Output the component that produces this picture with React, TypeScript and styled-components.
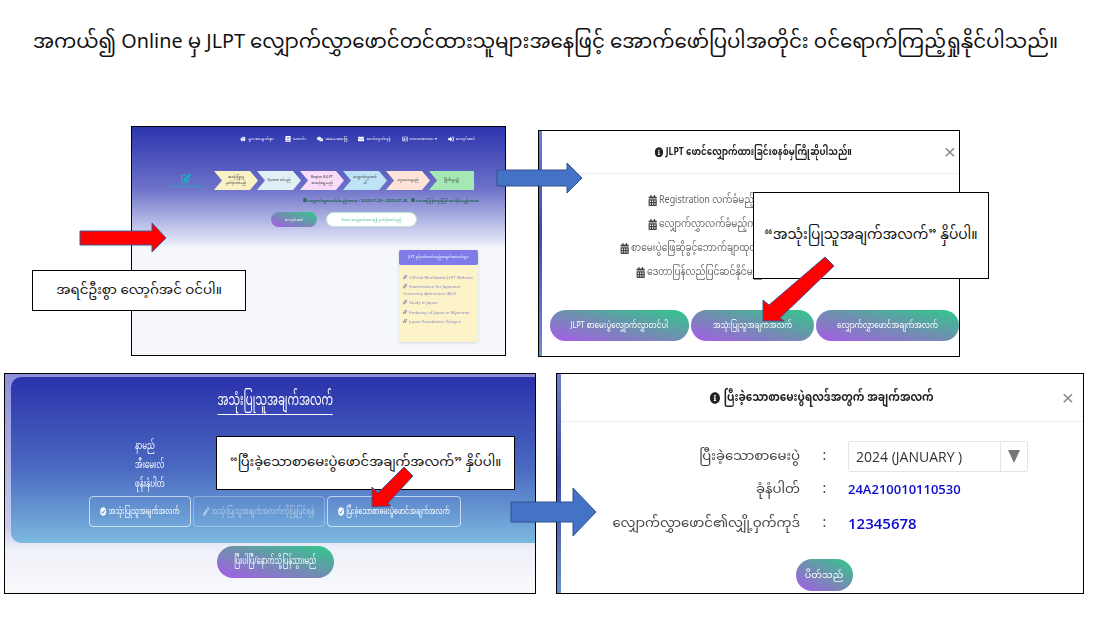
import styled, { createGlobalStyle } from "styled-components";
import {
  FaBook,
  FaCalendarAlt,
  FaCheckCircle,
  FaComments,
  FaEdit,
  FaEnvelope,
  FaHome,
  FaInfoCircle,
  FaLink,
  FaPen,
  FaRegAddressCard,
  FaSignInAlt,
} from "react-icons/fa";

const GlobalStyle = createGlobalStyle`
  html, body {
    margin: 0;
    padding: 0;
    background: #fff;
  }
  body {
    font-family: "Noto Sans Myanmar", "Padauk", "Myanmar Text", "Noto Sans", "Liberation Sans", sans-serif;
    color: #111;
  }
`;

const greenPurple = "linear-gradient(to top right, #a75ce8 0%, #6f8fb0 50%, #2fca8a 100%)";

const Slide = styled.div`
  position: relative;
  width: 1101px;
  height: 623px;
  overflow: hidden;
  background: #fff;
`;

const Title = styled.h1`
  margin: 0;
  height: 86px;
  padding-right: 10px;
  display: flex;
  align-items: center;
  justify-content: center;
  font-size: 19.8px;
  font-weight: 400;
  white-space: nowrap;
`;

const ShotRow = styled.div<{ $top: number; $left: number; $gap: number }>`
  display: flex;
  align-items: flex-start;
  margin-top: ${(p) => p.$top}px;
  padding-left: ${(p) => p.$left}px;
  gap: ${(p) => p.$gap}px;
`;

const Shot = styled.section<{ $w: number; $h: number; $drop?: number }>`
  box-sizing: border-box;
  flex: none;
  width: ${(p) => p.$w}px;
  height: ${(p) => p.$h}px;
  margin-top: ${(p) => p.$drop ?? 0}px;
  border: 1px solid #000;
  overflow: hidden;
  background: #fff;
`;

/* the screenshots in the slide were squeezed sideways, so their text is too */
const Squeezed = styled.span<{ $x: number; $gap?: number }>`
  display: inline-flex;
  align-items: center;
  gap: ${(p) => p.$gap ?? 3}px;
  flex: none;
  white-space: nowrap;
  transform: scaleX(${(p) => p.$x});
`;

/* first screenshot: the landing page, very small and soft */
const Landing = styled.div`
  height: 100%;
  display: flex;
  flex-direction: column;
  background: linear-gradient(180deg, #2c35ae 0%, #6d72c9 27%, #b7bbe6 42%, #e6e8f6 51%, #f5f7fb 53%);
  filter: blur(0.65px);
`;

const TopNav = styled.nav`
  display: flex;
  justify-content: flex-end;
  gap: 11px;
  padding: 5px 30px 0 0;
  height: 14px;
`;

const NavItem = styled.span`
  display: flex;
  align-items: center;
  gap: 2px;
  color: #fff;
  font-size: 4.2px;
  line-height: 6px;
  white-space: nowrap;
  svg {
    font-size: 6px;
  }
`;

const StepBar = styled.div`
  display: flex;
  align-items: center;
  margin-top: 25px;
  padding-left: 27px;
`;

const StepIntro = styled.div`
  width: 54px;
  display: flex;
  flex-direction: column;
  align-items: center;
  color: #14b4bc;
  font-size: 3.6px;
  line-height: 6px;
  white-space: nowrap;
  svg {
    font-size: 10px;
  }
`;

const Steps = styled.div`
  display: flex;
  margin-left: 1px;
`;

const Step = styled.div<{ $bg: string; $last?: boolean }>`
  width: ${(p) => (p.$last ? 45 : 44)}px;
  height: 19px;
  margin-right: -1px;
  display: flex;
  align-items: center;
  justify-content: center;
  padding: 0 9px;
  box-sizing: border-box;
  text-align: center;
  background: ${(p) => p.$bg};
  clip-path: ${(p) =>
    p.$last
      ? "polygon(0 0, 100% 0, 100% 100%, 0 100%, 8px 50%)"
      : "polygon(0 0, calc(100% - 8px) 0, 100% 50%, calc(100% - 8px) 100%, 0 100%, 8px 50%)"};
  font-size: 3.4px;
  line-height: 5.5px;
  color: #333;
`;

const DateLine = styled.div`
  display: flex;
  justify-content: flex-end;
  gap: 4px;
  margin-top: 8px;
  padding-right: 26px;
  color: #17603c;
  font-size: 4px;
  font-weight: 600;
  line-height: 6px;
  white-space: nowrap;
`;

const LandingActions = styled.div`
  display: flex;
  gap: 9px;
  margin-top: 8px;
  padding-left: 139px;
`;

const LoginPill = styled.span`
  width: 46px;
  height: 15px;
  border-radius: 8px;
  display: flex;
  align-items: center;
  justify-content: center;
  background: ${greenPurple};
  color: #fff;
  font-size: 4px;
`;

const FormPill = styled.span`
  width: 91px;
  height: 15px;
  box-sizing: border-box;
  border: 1px solid #bfe6d9;
  border-radius: 8px;
  display: flex;
  align-items: center;
  justify-content: center;
  background: #fff;
  color: #3bbd8d;
  font-size: 3.8px;
  white-space: nowrap;
`;

const InfoCard = styled.aside`
  width: 79px;
  height: 92px;
  margin: 23px 0 0 267px;
  border-radius: 2px;
  background: #fdf3c8;
  box-shadow: 0 1px 3px rgba(80, 80, 120, 0.2);
  color: #8a88c8;
  font-size: 4.3px;
  line-height: 6.5px;
`;

const InfoCardHead = styled.div`
  height: 15px;
  border-radius: 2px;
  display: flex;
  align-items: center;
  justify-content: center;
  background: #7f7be8;
  color: #fff;
  font-size: 3.4px;
  white-space: nowrap;
`;

const InfoLinks = styled.ul`
  list-style: none;
  margin: 0;
  padding: 10px 4px 0;
  li {
    margin-bottom: 2.6px;
  }
  svg {
    margin-right: 2px;
    color: #7a78c4;
  }
`;

/* modal screenshots */
const Modal = styled.div<{ $strip: number }>`
  height: 100%;
  box-sizing: border-box;
  border-left: ${(p) => p.$strip}px solid;
  border-image: linear-gradient(180deg, #6f7fd2 0%, #3c49b0 45%, #6a8fd0 100%) 1;
  display: flex;
  flex-direction: column;
  filter: blur(0.25px);
`;

const ModalHead = styled.header<{ $h: number; $size: number; $nudge?: number }>`
  position: relative;
  flex: none;
  box-sizing: border-box;
  height: ${(p) => p.$h}px;
  padding-left: ${(p) => p.$nudge ?? 0}px;
  border-bottom: 1px solid #eee;
  display: flex;
  align-items: center;
  justify-content: center;
  font-size: ${(p) => p.$size}px;
  font-weight: 700;
  color: #222;
  white-space: nowrap;
`;

const CloseMark = styled.span<{ $right: number }>`
  position: absolute;
  right: ${(p) => p.$right}px;
  top: 50%;
  transform: translateY(-50%);
  font-family: "Liberation Sans", sans-serif;
  font-size: 21px;
  font-weight: 400;
  color: #8b8b8b;
`;

const PeriodList = styled.div`
  flex: 1;
  display: flex;
  flex-direction: column;
  padding: 17px 0 0;
  gap: 6px;
`;

const PeriodRow = styled.div<{ $indent: number }>`
  display: flex;
  height: 18px;
  align-items: center;
  margin-left: ${(p) => p.$indent}px;
  font-size: 10.5px;
  color: #666;
  white-space: nowrap;
  ${Squeezed} {
    transform-origin: left center;
  }
  svg {
    color: #444;
    font-size: 11px;
  }
`;

const ModalActions = styled.div`
  display: flex;
  gap: 2px;
  padding: 0 0 15px 8px;
`;

const GradientPill = styled.span<{ $w: number; $h: number; $size: number }>`
  flex: none;
  width: ${(p) => p.$w}px;
  height: ${(p) => p.$h}px;
  border-radius: ${(p) => Math.round(p.$h / 2) + 1}px;
  display: flex;
  align-items: center;
  justify-content: center;
  background: ${greenPurple};
  color: #fff;
  font-size: ${(p) => p.$size}px;
  white-space: nowrap;
`;

/* profile screenshot */
const Profile = styled.div`
  height: 100%;
  display: flex;
  flex-direction: column;
  align-items: center;
  background: linear-gradient(180deg, #8d90d8 0%, #c9cdec 70%, #eef0f8 80%, #fafafd 100%);
  filter: blur(0.25px);
`;

const ProfileHero = styled.div`
  align-self: stretch;
  box-sizing: border-box;
  height: 166px;
  flex: none;
  margin: 3px 0 0 6px;
  padding-left: 5px;
  border-radius: 10px 0 0 10px;
  background: linear-gradient(180deg, #2b32ac 0%, #4a69c0 55%, #7cb9e0 100%);
  color: #fff;
  display: flex;
  flex-direction: column;
  align-items: center;
`;

const HeroTitle = styled.h2`
  margin: 14px 0 0;
  padding-bottom: 1px;
  border-bottom: 1px solid #fff;
  font-size: 16px;
  line-height: 22px;
  font-weight: 400;
  white-space: nowrap;
  transform: scaleX(0.64);
`;

const FieldLabels = styled.div`
  align-self: flex-start;
  margin: 22px 0 0 119px;
  display: flex;
  flex-direction: column;
  align-items: flex-start;
  font-size: 11px;
  line-height: 19px;
  ${Squeezed} {
    transform-origin: left center;
  }
`;

const HeroButtons = styled.div`
  align-self: flex-start;
  display: flex;
  gap: 2px;
  margin: 2px 0 0 73px;
`;

const OutlineButton = styled.span<{ $w: number; $off?: boolean }>`
  box-sizing: border-box;
  width: ${(p) => p.$w}px;
  height: 31px;
  border: 1px solid rgba(255, 255, 255, ${(p) => (p.$off ? 0.3 : 0.65)});
  border-radius: 4px;
  display: flex;
  align-items: center;
  justify-content: center;
  color: rgba(255, 255, 255, ${(p) => (p.$off ? 0.45 : 1)});
  font-size: 9px;
  white-space: nowrap;
`;

const BackRow = styled.div`
  display: flex;
  margin: 3px 0 0 10px;
`;

/* result screenshot */
const ResultForm = styled.div`
  flex: 1;
  display: grid;
  grid-template-columns: 239px 48px auto;
  grid-template-rows: 31px 34px 34px;
  align-content: start;
  align-items: center;
  padding-top: 19px;
`;

const FieldName = styled.span`
  text-align: right;
  font-size: 13.3px;
  color: #444;
  white-space: nowrap;
`;

const Colon = styled.span`
  text-align: center;
  font-size: 14px;
  color: #444;
  padding-left: 1px;
`;

const FieldValue = styled.span<{ $size: number }>`
  font-family: "Open Sans", "Noto Sans", sans-serif;
  font-size: ${(p) => p.$size}px;
  font-weight: 600;
  color: #0a0ad0;
`;

const YearSelect = styled.div`
  box-sizing: border-box;
  width: 180px;
  height: 31px;
  border: 1px solid #e4e4e4;
  border-radius: 2px;
  display: flex;
  align-items: center;
  padding-left: 7px;
  font-family: "Open Sans", "Noto Sans", sans-serif;
  font-size: 14px;
  font-weight: 500;
  color: #333;
  white-space: nowrap;
`;

const SelectCaret = styled.span`
  margin-left: auto;
  align-self: stretch;
  width: 26px;
  border-left: 1px solid #e4e4e4;
  display: flex;
  align-items: center;
  justify-content: center;
  &::after {
    content: "";
    border-left: 6px solid transparent;
    border-right: 6px solid transparent;
    border-top: 13px solid #777;
  }
`;

const CloseRow = styled.div`
  display: flex;
  justify-content: center;
  padding: 0 0 2px 4px;
`;

/* callouts and arrows that lie over the screenshots */
const Callout = styled.div<{ $x: number; $y: number; $w: number; $h: number; $size: number }>`
  position: absolute;
  left: ${(p) => p.$x}px;
  top: ${(p) => p.$y}px;
  width: ${(p) => p.$w}px;
  height: ${(p) => p.$h}px;
  box-sizing: border-box;
  border: 1px solid #000;
  background: #fff;
  display: flex;
  align-items: center;
  justify-content: center;
  font-size: ${(p) => p.$size}px;
  color: #111;
  white-space: nowrap;
`;

const ArrowLayer = styled.svg`
  position: absolute;
  inset: 0;
  width: 1101px;
  height: 623px;
  pointer-events: none;
`;

const stepItems = [
  { bg: "#fbf2c4", text: "အသုံးပြုသူ မှတ်ပုံတင်မည်" },
  { bg: "#e0f0f6", text: "System ဝင်မည်" },
  { bg: "#fbdcf8", text: "Region & JLPT အဆင့်ရွေးမည်" },
  { bg: "#bfe3f6", text: "လျှောက်လွှာတင်ပါ" },
  { bg: "#fde3d8", text: "ငွေပေးချေမည်" },
  { bg: "#a5e8b4", text: "ပြီးစီးမှုရရှိ", last: true },
];

const App = () => {
  return (
    <Slide>
      <GlobalStyle />
      <Title>
        အကယ်၍ Online မှ JLPT လျှောက်လွှာဖောင်တင်ထားသူများအနေဖြင့် အောက်ဖော်ပြပါအတိုင်း ဝင်ရောက်ကြည့်ရှုနိုင်ပါသည်။
      </Title>

      <ShotRow $top={40} $left={131} $gap={32}>
        <Shot $w={375} $h={230}>
          <Landing>
            <TopNav>
              <NavItem><FaHome />မူလစာမျက်နှာ</NavItem>
              <NavItem><FaBook />သတင်း</NavItem>
              <NavItem><FaComments />အမေးအဖြေ</NavItem>
              <NavItem><FaEnvelope />ဆက်သွယ်ရန်</NavItem>
              <NavItem><FaRegAddressCard />ဘာသာစကား ▾</NavItem>
              <NavItem><FaSignInAlt />လော့ဂ်အင်</NavItem>
            </TopNav>
            <StepBar>
              <StepIntro>
                <FaEdit />
                လျှောက်လွှာအဆင့်ဆင့်
              </StepIntro>
              <Steps>
                {stepItems.map((s) => (
                  <Step key={s.text} $bg={s.bg} $last={s.last}>{s.text}</Step>
                ))}
              </Steps>
            </StepBar>
            <DateLine>
              <span><FaCalendarAlt /> လျှောက်လွှာလက်ခံမည့်ကာလ : 2023-07-26 ~ 2023-07-28</span>
              <span><FaCalendarAlt /> ဒေတာပြန်လည်ပြင်ဆင်နိုင်မည့်ကာလ</span>
            </DateLine>
            <LandingActions>
              <LoginPill>လော့ဂ်အင်</LoginPill>
              <FormPill>Form လျှောက်ထားရန် မှတ်ပုံတင်မည်</FormPill>
            </LandingActions>
            <InfoCard>
              <InfoCardHead>JLPT နှင့်ပတ်သက်သည့်အချက်အလက်များ</InfoCardHead>
              <InfoLinks>
                <li><FaLink />Official Worldwide JLPT Website</li>
                <li><FaLink />Examination for Japanese University Admission (EJU)</li>
                <li><FaLink />Study in Japan</li>
                <li><FaLink />Embassy of Japan in Myanmar</li>
                <li><FaLink />Japan Foundation Yangon</li>
              </InfoLinks>
            </InfoCard>
          </Landing>
        </Shot>

        <Shot $w={422} $h={227} $drop={4}>
          <Modal $strip={3}>
            <ModalHead $h={43} $size={10.5} $nudge={6}>
              <Squeezed $x={0.82}>
                <FaInfoCircle />
                JLPT ဖောင်လျှောက်ထားခြင်းစနစ်မှကြိုဆိုပါသည်။
              </Squeezed>
              <CloseMark $right={3}>×</CloseMark>
            </ModalHead>
            <PeriodList>
              <PeriodRow $indent={106}><Squeezed $x={0.85} $gap={2}><FaCalendarAlt />Registration လက်ခံမည့်ကာလ</Squeezed></PeriodRow>
              <PeriodRow $indent={106}><Squeezed $x={0.85} $gap={2}><FaCalendarAlt />လျှောက်လွှာလက်ခံမည့်ကာလ</Squeezed></PeriodRow>
              <PeriodRow $indent={78}><Squeezed $x={0.85} $gap={2}><FaCalendarAlt />စာမေးပွဲဖြေဆိုခွင့်ဘောက်ချာထုတ်နိုင်မည့်ကာလ</Squeezed></PeriodRow>
              <PeriodRow $indent={94}><Squeezed $x={0.85} $gap={2}><FaCalendarAlt />ဒေတာပြန်လည်ပြင်ဆင်နိုင်မည့်ကာလ</Squeezed></PeriodRow>
            </PeriodList>
            <ModalActions>
              <GradientPill $w={139} $h={31} $size={9.5}><Squeezed $x={0.76}>JLPT စာမေးပွဲလျှောက်လွှာတင်ပါ</Squeezed></GradientPill>
              <GradientPill $w={123} $h={31} $size={9.5}><Squeezed $x={0.74}>အသုံးပြုသူအချက်အလက်</Squeezed></GradientPill>
              <GradientPill $w={143} $h={31} $size={9.5}><Squeezed $x={0.76}>လျှောက်လွှာဖောင်အချက်အလက်</Squeezed></GradientPill>
            </ModalActions>
          </Modal>
        </Shot>
      </ShotRow>

      <ShotRow $top={16} $left={4} $gap={20}>
        <Shot $w={532} $h={221}>
          <Profile>
            <ProfileHero>
              <HeroTitle>အသုံးပြုသူအချက်အလက်</HeroTitle>
              <FieldLabels>
                <Squeezed $x={0.64}>နာမည်</Squeezed>
                <Squeezed $x={0.64}>အီးမေးလ်</Squeezed>
                <Squeezed $x={0.64}>ဖုန်းနံပါတ်</Squeezed>
              </FieldLabels>
              <HeroButtons>
                <OutlineButton $w={102}><Squeezed $x={0.7}><FaCheckCircle />အသုံးပြုသူအချက်အလက်</Squeezed></OutlineButton>
                <OutlineButton $w={132} $off><Squeezed $x={0.7}><FaPen />အသုံးပြုသူအချက်အလက်ကိုပြုပြင်ရန်</Squeezed></OutlineButton>
                <OutlineButton $w={134}><Squeezed $x={0.7}><FaCheckCircle />ပြီးခဲ့သောစာမေးပွဲဖောင်အချက်အလက်</Squeezed></OutlineButton>
              </HeroButtons>
            </ProfileHero>
            <BackRow>
              <GradientPill $w={117} $h={32} $size={10}>
                <Squeezed $x={0.65}>ပြီးပါပြီ/နောက်သို့ပြန်သွားမည်</Squeezed>
              </GradientPill>
            </BackRow>
          </Profile>
        </Shot>

        <Shot $w={528} $h={221}>
          <Modal $strip={4}>
            <ModalHead $h={48} $size={12}>
              <Squeezed $x={0.87} $gap={4}>
                <FaInfoCircle />
                ပြီးခဲ့သောစာမေးပွဲရလဒ်အတွက် အချက်အလက်
              </Squeezed>
              <CloseMark $right={9}>×</CloseMark>
            </ModalHead>
            <ResultForm>
              <FieldName>ပြီးခဲ့သောစာမေးပွဲ</FieldName>
              <Colon>:</Colon>
              <YearSelect>
                2024 (JANUARY )
                <SelectCaret />
              </YearSelect>
              <FieldName>ခုံနံပါတ်</FieldName>
              <Colon>:</Colon>
              <FieldValue $size={13}>24A210010110530</FieldValue>
              <FieldName>လျှောက်လွှာဖောင်၏လျှို့ဝှက်ကုဒ်</FieldName>
              <Colon>:</Colon>
              <FieldValue $size={15}>12345678</FieldValue>
            </ResultForm>
            <CloseRow>
              <GradientPill $w={57} $h={32} $size={9.5}>ပိတ်သည်</GradientPill>
            </CloseRow>
          </Modal>
        </Shot>
      </ShotRow>

      <Callout $x={32} $y={270} $w={214} $h={41} $size={13.4}>အရင်ဦးစွာ လော့ဂ်အင် ဝင်ပါ။</Callout>
      <Callout $x={753} $y={192} $w={236} $h={87} $size={13.8}>“အသုံးပြုသူအချက်အလက်” နှိပ်ပါ။</Callout>
      <Callout $x={216} $y={436} $w={299} $h={54} $size={13.2}>“ပြီးခဲ့သောစာမေးပွဲဖောင်အချက်အလက်” နှိပ်ပါ။</Callout>

      <ArrowLayer viewBox="0 0 1101 623">
        <g stroke="#3c5a96" strokeWidth="1">
          <polygon fill="#f00" points="80,231 152,231 152,223 166,238 152,252 152,245 80,245" />
          <polygon fill="#f00" points="825,257 834,266 780,318 784,321 763,321 763,300 769,305" />
          <polygon fill="#f00" points="404,467 413,476 388,503 391,506 372,507 372,487 378,493" />
        </g>
        <g fill="#4472c4" stroke="#2f528f" strokeWidth="1">
          <polygon points="497,170 567,170 567,163 582,178 567,193 567,186 497,186" />
          <polygon points="511,502 573,502 573,488 596,512 573,536 573,522 511,522" />
        </g>
      </ArrowLayer>
    </Slide>
  );
};

export default App;
